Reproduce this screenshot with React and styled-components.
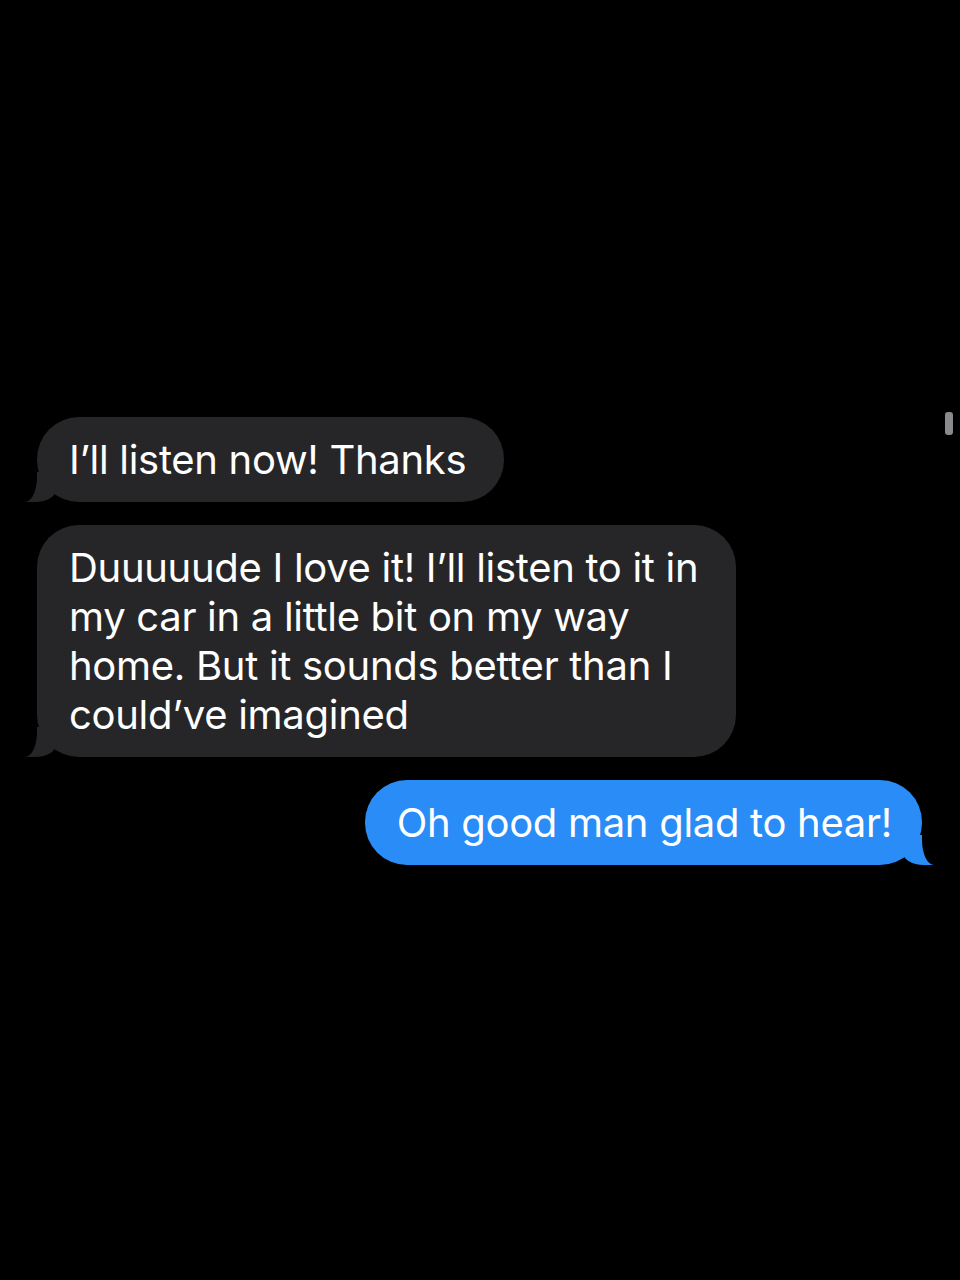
import React from "react";
import styled, { createGlobalStyle } from "styled-components";

const colors = {
  bg: "#000000",
  gray: "#262628",
  blue: "#2a8cf6",
  text: "#ffffff",
  scroll: "#8a8a8c",
};

const GlobalStyle = createGlobalStyle`
  html, body {
    margin: 0;
    padding: 0;
    background: ${colors.bg};
  }
  * {
    box-sizing: border-box;
  }
`;

const messages = [
  { id: 1, from: "them", lines: ["I’ll listen now! Thanks"] },
  {
    id: 2,
    from: "them",
    lines: [
      "Duuuuude I love it! I’ll listen to it in",
      "my car in a little bit on my way",
      "home. But it sounds better than I",
      "could’ve imagined",
    ],
  },
  { id: 3, from: "me", lines: ["Oh good man glad to hear!"] },
];

function App() {
  return (
    <>
      <GlobalStyle />
      <Screen>
        <Thread>
          {messages.map((m) => (
            <Row key={m.id} $mine={m.from === "me"}>
              <Bubble $mine={m.from === "me"}>
                {m.lines.map((line, i) => (
                  <Line key={i}>{line}</Line>
                ))}
              </Bubble>
            </Row>
          ))}
        </Thread>
        <ScrollThumb />
      </Screen>
    </>
  );
}
export default App;

const Screen = styled.div`
  position: relative;
  width: 960px;
  height: 1280px;
  background: ${colors.bg};
  overflow: hidden;
  font-family: Inter, "Noto Sans", "Liberation Sans", sans-serif;
`;

const Thread = styled.div`
  display: flex;
  flex-direction: column;
  gap: 23px;
  padding: 417px 38px 0 37px;
`;

const Row = styled.div`
  display: flex;
  justify-content: ${(p) => (p.$mine ? "flex-end" : "flex-start")};
`;

const Bubble = styled.div`
  position: relative;
  padding: 18px ${(p) => (p.$mine ? "30px" : "38px")} 18px
    ${(p) => (p.$mine ? "32px" : "32px")};
  border-radius: 42px;
  background: ${(p) => (p.$mine ? colors.blue : colors.gray)};
  color: ${colors.text};
  font-size: 40px;
  line-height: 49px;
  letter-spacing: -0.3px;

  &::before {
    content: "";
    position: absolute;
    bottom: 0;
    ${(p) => (p.$mine ? "right: -12px;" : "left: -12px;")}
    width: 32px;
    height: 30px;
    background: ${(p) => (p.$mine ? colors.blue : colors.gray)};
    ${(p) =>
      p.$mine
        ? "border-bottom-left-radius: 22px 14px;"
        : "border-bottom-right-radius: 22px 14px;"}
  }

  &::after {
    content: "";
    position: absolute;
    bottom: 0;
    ${(p) => (p.$mine ? "right: -30px;" : "left: -30px;")}
    width: 30px;
    height: 30px;
    background: ${colors.bg};
    ${(p) =>
      p.$mine
        ? "border-bottom-left-radius: 12px 25px;"
        : "border-bottom-right-radius: 12px 25px;"}
  }
`;

const Line = styled.div`
  position: relative;
  z-index: 1;
  white-space: nowrap;
`;

const ScrollThumb = styled.div`
  position: absolute;
  top: 412px;
  left: 945px;
  width: 8px;
  height: 23px;
  border-radius: 3px;
  background: ${colors.scroll};
`;
